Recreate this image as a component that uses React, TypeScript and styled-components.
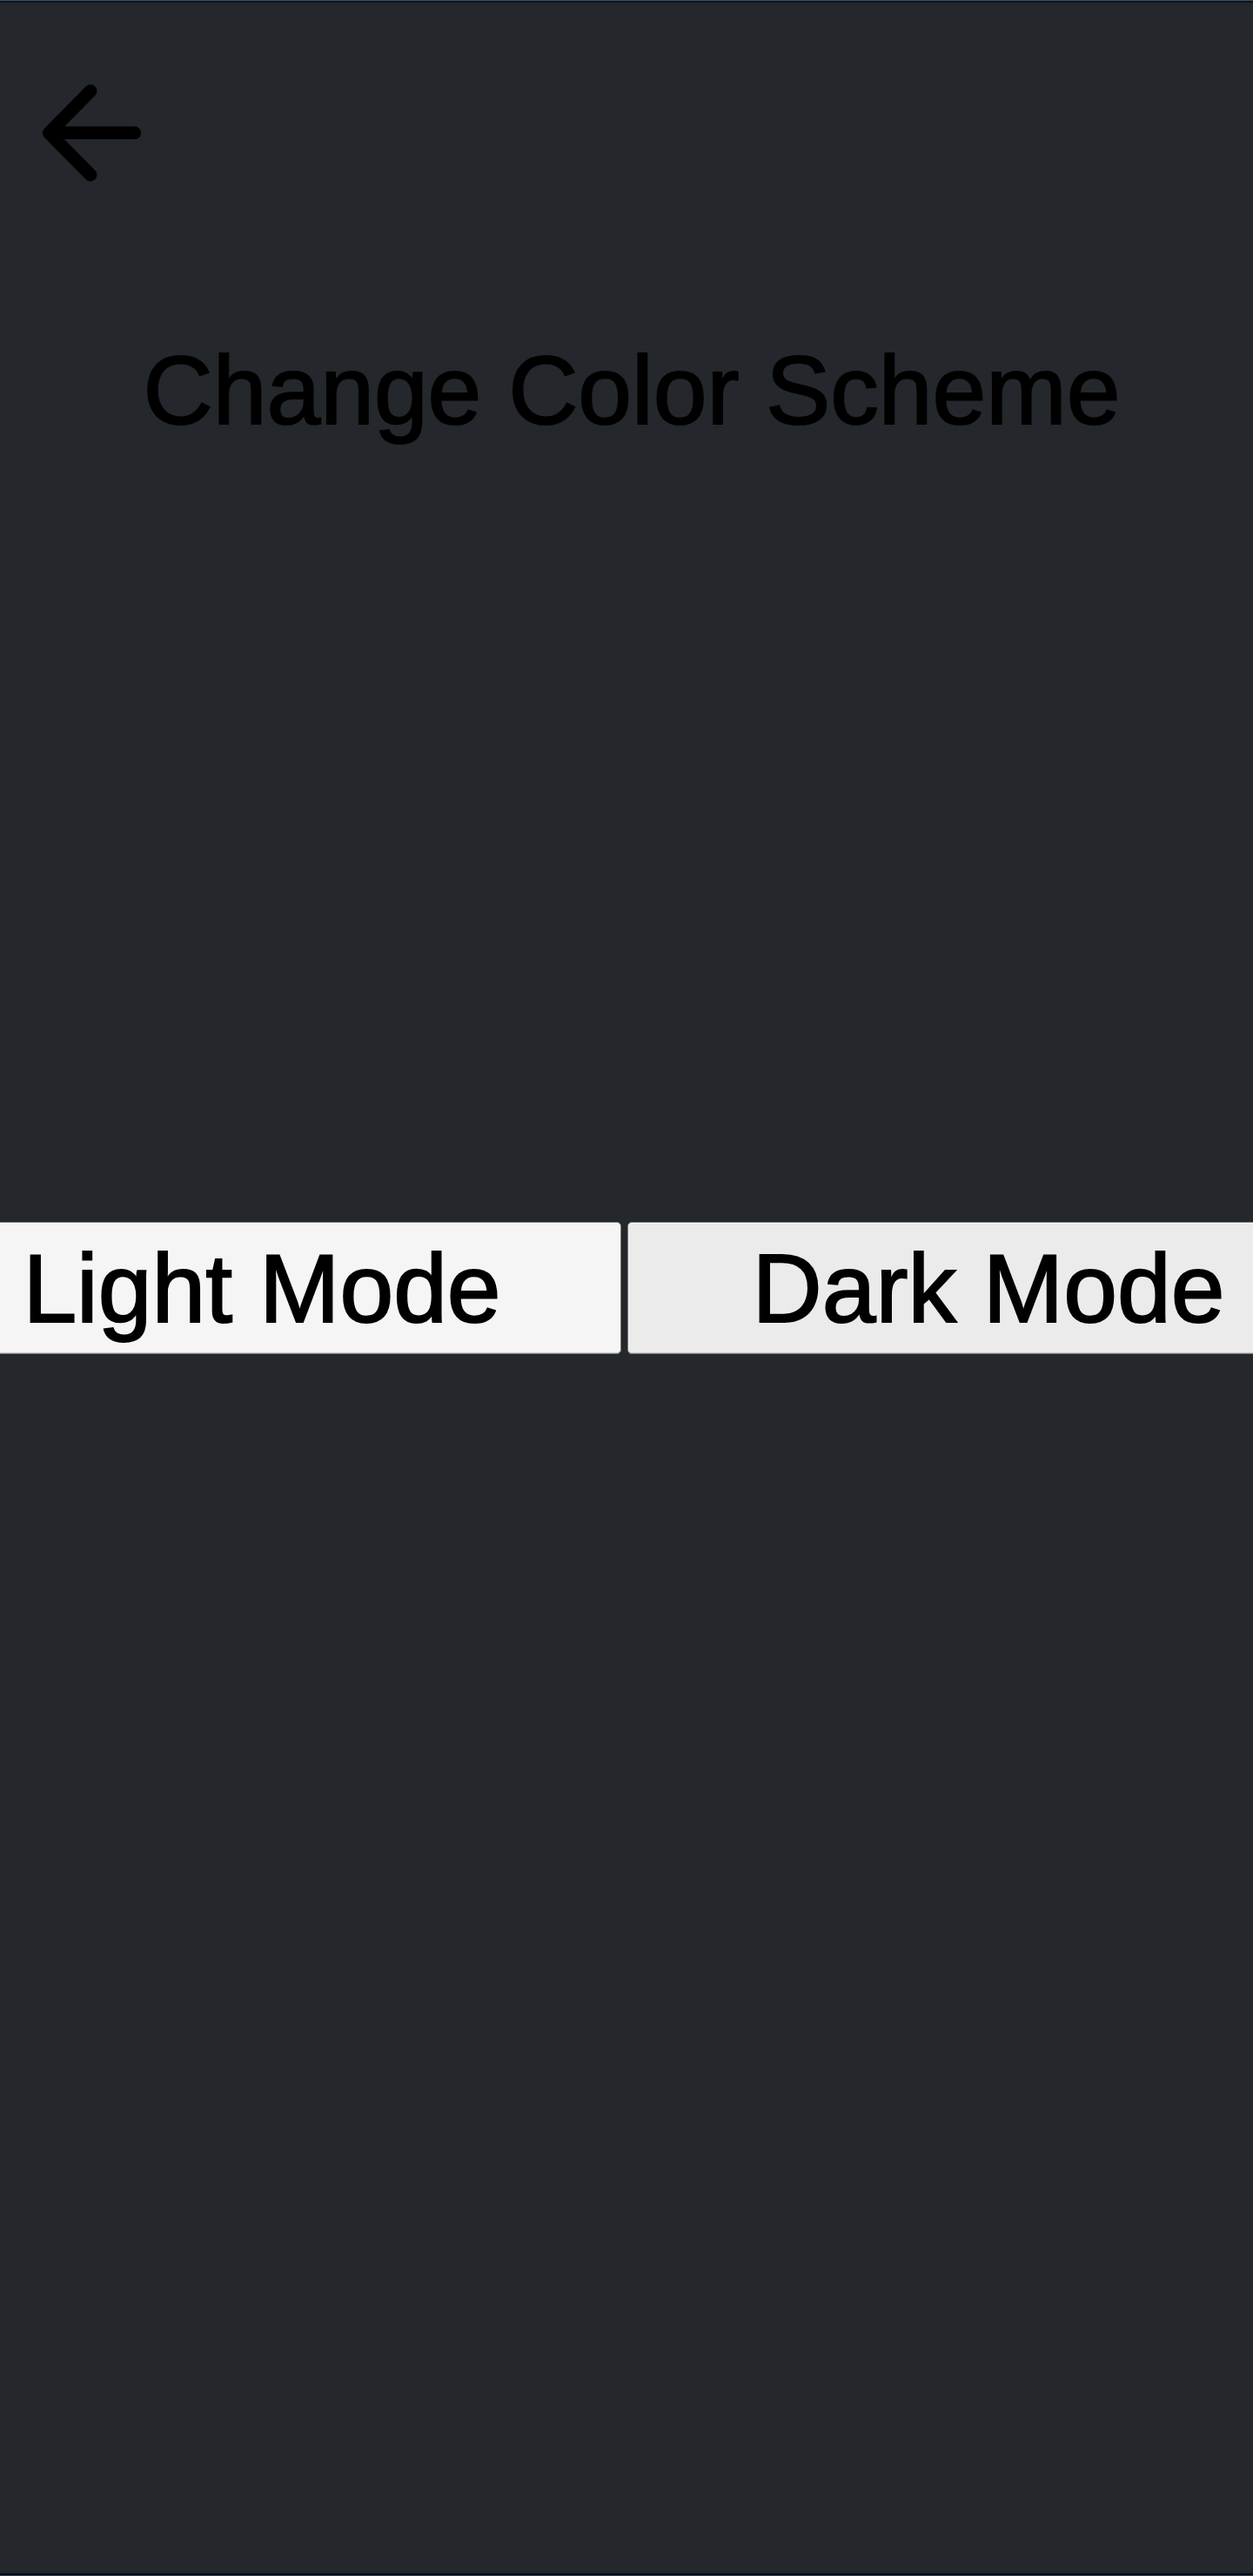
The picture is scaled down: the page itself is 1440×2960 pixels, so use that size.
import React, { useState } from "react";
import styled, { createGlobalStyle } from "styled-components";

const GlobalStyle = createGlobalStyle`
  *, *::before, *::after { box-sizing: border-box; }
  body { margin: 0; background: #24272b; }
`;

const Screen = styled.main`
  display: grid;
  grid-template-rows: 1fr auto 1fr;
  min-height: 100vh;
  overflow: hidden;
  background: #24272b;
  box-shadow: inset 0 1px #38506f, inset 0 3px #0a1421, inset 0 -1px #323d63,
    inset 0 -3px #060b18;
  color: #000;
  font-family: "Liberation Sans", Arial, sans-serif;
`;

const Header = styled.header`
  display: flex;
  flex-direction: column;
  align-items: flex-start;
  padding-top: 69px;
`;

const BackButton = styled.button`
  display: flex;
  margin-left: 21px;
  padding: 0;
  border: 0;
  background: none;
  color: inherit;
  cursor: pointer;
`;

const Title = styled.h1`
  align-self: stretch;
  margin: 148px 0 0;
  padding-left: 12px;
  font-size: 111px;
  font-weight: 400;
  line-height: 128px;
  text-align: center;
  -webkit-text-stroke: 2px #000;
  stroke-linejoin: round;
`;

/* The pair of buttons is wider than the screen and bleeds off both sides. */
const ModeRow = styled.div`
  display: grid;
  grid-template-columns: 1fr 1fr;
  gap: 7px;
  margin: 0 -109px 0 -114px;
`;

const ModeButton = styled.button<{ $active: boolean }>`
  height: 152px;
  padding: 2px 0 0 2px;
  border: 1px solid #777577;
  border-radius: 5px;
  background: ${(p) => (p.$active ? "#f5f5f5" : "#ebebeb")};
  box-shadow: inset 0 1px #fff, inset 0 -1px #c8c8c8;
  color: #000;
  font-family: inherit;
  font-size: 111px;
  line-height: 128px;
  white-space: nowrap;
  -webkit-text-stroke: 2px #000;
  stroke-linejoin: round;
  cursor: pointer;
`;

export default function App() {
  const [mode, setMode] = useState("light");
  return (
    <>
      <GlobalStyle />
      <Screen>
        <Header>
          <BackButton type="button" aria-label="Back">
            <svg
              width="168"
              height="168"
              viewBox="0 0 168 168"
              fill="none"
              stroke="currentColor"
              strokeWidth="14.8"
              strokeLinecap="round"
              strokeLinejoin="round"
              aria-hidden="true"
            >
              <path d="M83 35.5 35.3 83.7 83 132M35.3 83.7H133.7" />
            </svg>
          </BackButton>
          <Title>Change Color Scheme</Title>
        </Header>
        <ModeRow>
          <ModeButton
            type="button"
            $active={mode === "light"}
            aria-pressed={mode === "light"}
            onClick={() => setMode("light")}
          >
            Light Mode
          </ModeButton>
          <ModeButton
            type="button"
            $active={mode === "dark"}
            aria-pressed={mode === "dark"}
            onClick={() => setMode("dark")}
          >
            Dark Mode
          </ModeButton>
        </ModeRow>
      </Screen>
    </>
  );
}
